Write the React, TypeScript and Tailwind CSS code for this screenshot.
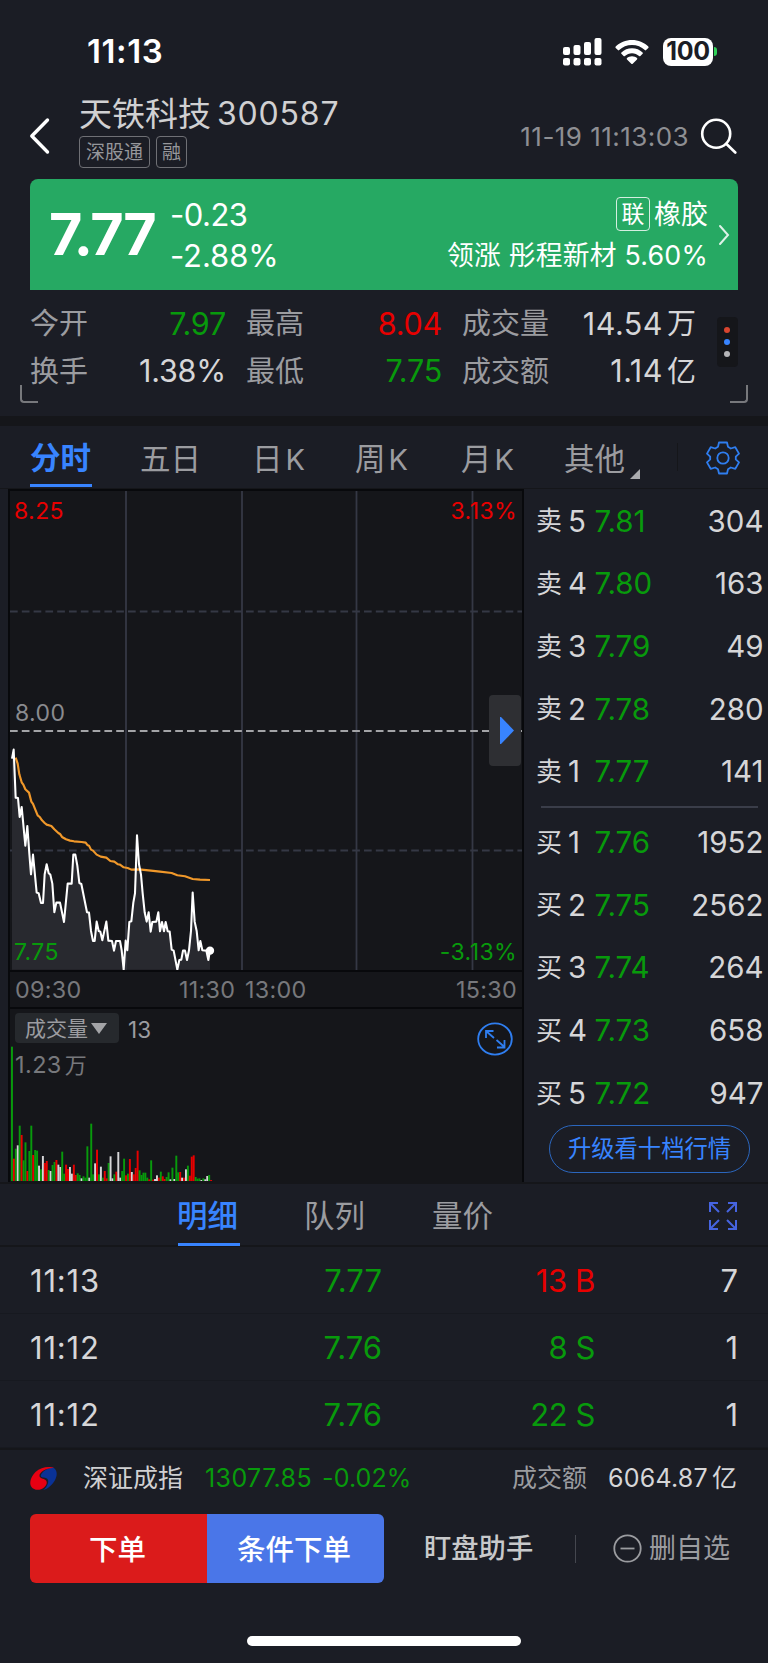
import type { ReactNode } from "react";

const UP = "text-[#e80000]";
const DOWN = "text-[#089a0c]";

/* ---------- status bar ---------- */

function StatusBar() {
  return (
    <div className="flex h-[92px] items-center justify-between pt-[11px] pl-[87px] pr-[51px] text-white">
      <span className="text-[33px] font-semibold leading-none tracking-[0.6px]">11:13</span>
      <div className="flex h-7 items-center">
        <svg width="40" height="28" viewBox="0 0 40 28" fill="#fff" className="mr-[13px]">
          <rect x="1" y="9" width="7" height="8" rx="2" />
          <rect x="11.5" y="7" width="7" height="10" rx="2" />
          <rect x="22" y="4" width="7" height="13" rx="2" />
          <rect x="32.5" y="0" width="7" height="17" rx="2" />
          <rect x="1" y="20" width="7" height="7.5" rx="2" />
          <rect x="11.5" y="20" width="7" height="7.5" rx="2" />
          <rect x="22" y="20" width="7" height="7.5" rx="2" />
          <rect x="32.5" y="20" width="7" height="7.5" rx="2" />
        </svg>
        <svg width="34" height="26" viewBox="0 0 34 26" fill="#fff" className="mr-[14px]">
          <path d="M17 1C10.600 1 4.900 3.500.7 7.500q-.7.700 0 1.400l2.200 2.200q.6.600 1.300 0C7.500 8 12 6.100 17 6.100S26.500 8 29.800 11.100q.7.600 1.300 0l2.200-2.200q.7-.700 0-1.400C29.100 3.500 23.400 1 17 1Z" />
          <path d="M17 9.300c-4.100 0-7.800 1.600-10.600 4.100q-.7.700 0 1.400l2.200 2.200q.6.600 1.300.1C11.800 15.400 14.300 14.300 17 14.300s5.200 1.100 7.100 2.800q.7.500 1.300-.1l2.200-2.200q.7-.7 0-1.400C24.800 10.900 21.100 9.300 17 9.300Z" />
          <path d="M17 17.300c-2 0-3.700.7-5 1.800q-.7.700 0 1.400l4.300 4.200q.7.600 1.400 0l4.300-4.200q.7-.7 0-1.400c-1.300-1.100-3-1.800-5-1.800Z" />
        </svg>
        <div className="flex h-[28px] w-[50px] items-center justify-center rounded-[8px] bg-white text-[25px] font-bold leading-none tracking-[-0.3px] text-[#1b1d25]">
          100
        </div>
        <div className="ml-[1px] h-[9px] w-[3px] rounded-r-full bg-[#30d158]" />
      </div>
    </div>
  );
}

/* ---------- title ---------- */

function Tag({ children, width }: { children: ReactNode; width: string }) {
  return (
    <span className={`flex h-[32px] items-center justify-center rounded-[4px] border border-[#6f7075] text-[19px] leading-none text-[#96979b] ${width}`}>
      {children}
    </span>
  );
}

function TitleBar() {
  return (
    <div className="flex h-[87px] items-start pl-[29px] pr-[31px]">
      <svg width="22" height="38" viewBox="0 0 22 38" className="mt-[25px] shrink-0" fill="none" stroke="#fff" strokeWidth="3.400" strokeLinecap="round" strokeLinejoin="round">
        <path d="M18.500 3 2.800 19 18.500 35" />
      </svg>
      <div className="ml-[28px] flex flex-col">
        <div className="flex h-[44px] items-center text-[#d0d0d2]">
          <span className="text-[33px] leading-none">天铁科技</span>
          <span className="ml-[6px] text-[32px] leading-none tracking-[0.800px]">300587</span>
        </div>
        <div className="flex gap-[6px]">
          <Tag width="w-[71px]">深股通</Tag>
          <Tag width="w-[31px]">融</Tag>
        </div>
      </div>
      <span className="ml-auto flex h-[89px] items-center text-[26px] leading-none tracking-[0.450px] text-[#8e8f93]">11-19 11:13:03</span>
      <svg width="37" height="36" viewBox="0 0 37 36" className="ml-[11px] mt-[26px] shrink-0" fill="none" stroke="#fff" strokeWidth="2.600" strokeLinecap="round">
        <circle cx="16.200" cy="15.700" r="14" />
        <path d="m26.500 26 8.800 8.500" />
      </svg>
    </div>
  );
}

/* ---------- price banner ---------- */

function PriceBanner() {
  return (
    <div className="mx-[30px] flex h-[111px] items-center rounded-t-[8px] bg-[#26a963] pl-[19px] pr-[8px] text-white">
      <span className="w-[121px] text-[57.500px] font-bold leading-none tracking-[-1.400px]">7.77</span>
      <div className="flex flex-col text-[31px] leading-none">
        <span className="flex h-[41px] items-center tracking-[-0.500px]">-0.23</span>
        <span className="flex h-[41px] items-center tracking-[-0.100px]">-2.88%</span>
      </div>
      <div className="ml-auto flex flex-col items-end leading-none">
        <div className="flex h-[41px] items-center">
          <span className="flex h-[34px] w-[34px] items-center justify-center rounded-[4px] border border-white/80 text-[23px]">联</span>
          <span className="ml-[4px] text-[27px]">橡胶</span>
        </div>
        <span className="flex h-[41px] items-center whitespace-pre text-[26.800px] tracking-[0.200px]">领涨 彤程新材 5.60%</span>
      </div>
      <svg width="12" height="22" viewBox="0 0 12 22" className="ml-[10px]" fill="none" stroke="#fff" strokeOpacity=".85" strokeWidth="2" strokeLinecap="round">
        <path d="m2 2 8 9-8 9" />
      </svg>
    </div>
  );
}

/* ---------- stats ---------- */

function Stat({ label, value, unit, tone, width }: { label: string; value: string; unit?: string; tone: string; width: string }) {
  return (
    <div className={`flex h-[47.500px] items-center justify-between leading-none ${width}`}>
      <span className="text-[29px] text-[#9b9ca0]">{label}</span>
      <span className={`flex items-center text-[30.500px] ${tone}`}>
        <span className={unit ? "tracking-[0.500px]" : "tracking-[-0.200px]"}>{value}</span>
        {unit && <span className="ml-[4px] text-[29px]">{unit}</span>}
      </span>
    </div>
  );
}

function Stats() {
  const light = "text-[#d6d6d8]";
  return (
    <div className="relative flex h-[126px] pl-[30px] pt-[10px]">
      <div className="grid h-[95px] w-[666px] grid-cols-[196px_196px_234px] gap-x-[20px]">
        <Stat label="今开" value="7.97" tone={DOWN} width="w-[196px]" />
        <Stat label="最高" value="8.04" tone={UP} width="w-[196px]" />
        <Stat label="成交量" value="14.54" unit="万" tone={light} width="w-[234px]" />
        <Stat label="换手" value="1.38%" tone={light} width="w-[196px]" />
        <Stat label="最低" value="7.75" tone={DOWN} width="w-[196px]" />
        <Stat label="成交额" value="1.14" unit="亿" tone={light} width="w-[234px]" />
      </div>
      <div className="ml-[21px] mt-[17px] flex h-[50px] w-[21px] flex-col items-center justify-center gap-[6px] rounded-[4px] bg-[#15161a] pr-px">
        <i className="h-[6px] w-[6px] rounded-full bg-[#d8452f]" />
        <i className="h-[6px] w-[6px] rounded-full bg-[#3884ff]" />
        <i className="h-[6px] w-[6px] rounded-full bg-[#b5b5b8]" />
      </div>
      <i className="absolute bottom-[13px] left-[20px] h-[18px] w-[18px] rounded-bl-[4px] border-b-2 border-l-2 border-[#77787c]" />
      <i className="absolute bottom-[13px] right-[20px] h-[18px] w-[18px] rounded-br-[4px] border-b-2 border-r-2 border-[#77787c]" />
    </div>
  );
}

/* ---------- period tabs ---------- */

function PeriodTabs() {
  const tab = "flex h-full items-center whitespace-nowrap pt-[4px]";
  const letter = "text-[29px]";
  return (
    <div className="flex h-[63px] items-center border-b border-[#15161a] pl-[30px] pr-[28px] text-[30.500px] leading-none text-[#9b9ca0]">
      <div className="flex h-full w-[110px] flex-col text-[#3884ff]">
        <span className="flex h-[58px] items-center pt-[7px] font-semibold">分时</span>
        <span className="h-[3px] w-[62px] bg-[#3884ff]" />
      </div>
      <span className={`${tab} w-[112px]`}>五日</span>
      <span className={`${tab} w-[103px] gap-[3px]`}>日<span className={letter}>K</span></span>
      <span className={`${tab} w-[106px] gap-[3px]`}>周<span className={letter}>K</span></span>
      <span className={`${tab} w-[103px] gap-[3px]`}>月<span className={letter}>K</span></span>
      <span className={tab}>其他</span>
      <svg width="10" height="10" viewBox="0 0 10 10" className="ml-[5px] mt-[33px]" fill="#a9aaad">
        <path d="M10 0v10H0Z" />
      </svg>
      <span className="ml-[37px] h-[28px] w-px bg-[#15161a]" />
      <svg width="34" height="34" viewBox="0 0 34 34" className="ml-auto mt-[1px]" fill="none" stroke="#2f7ef0" strokeWidth="1.800" strokeLinejoin="round">
        <circle cx="17" cy="17" r="5.700" />
        <path d="M13 1.500h8l1 4.300 2.800 1.700 4.500-1.300 3.700 6.400-3.200 3v2.800l3.200 3-3.700 6.400-4.500-1.300-2.800 1.700-1 4.300h-8l-1-4.300-2.800-1.700-4.500 1.300L1 21.400l3.200-3v-2.800l-3.200-3 3.700-6.400 4.500 1.300L12 5.800Z" />
      </svg>
    </div>
  );
}

/* ---------- intraday chart ---------- */

const PRICE =
  "36,115 41,88 47,232 54,233 59,290 65,260 76,376 82,317 88,400 93,462 99,403 110,517 116,519 123,548 129,548 134,462 140,432 146,459 151,463 157,490 163,576 169,547 180,547 192,605 203,490 215,490 220,403 226,403 232,436 238,488 244,491 261,576 267,577 273,632 279,662 284,662 290,604 296,632 301,634 307,660 319,604 325,661 336,662 342,691 348,662 360,662 365,690 371,748 377,661 382,690 388,605 394,603 400,547 405,519 411,345 417,432 423,463 428,519 434,576 440,604 446,576 452,634 457,605 469,604 475,576 480,633 486,605 492,633 497,605 503,633 509,634 515,688 521,691 532,748 538,719 544,718 549,691 555,691 561,719 567,690 573,632 578,517 584,604 590,632 596,690 601,662 607,690 619,691 625,719 630,691";
const AVERAGE =
  "47,112 53,130 58,162 65,186 70,193 76,207 87,217 94,244 99,251 105,266 113,285 119,290 126,300 134,308 140,313 154,317 163,327 175,338 180,341 186,350 198,357 210,361 222,363 245,365 257,367 262,374 267,376 273,388 279,391 290,403 302,409 319,412 331,422 343,424 354,432 360,433 371,441 383,443 394,448 417,447 446,450 480,454 515,458 532,465 555,468 578,476 600,478 630,479";

function IntradayChart() {
  return (
    <div className="relative h-[479px] text-[23px] leading-none tracking-[0.400px]">
      <svg width="512" height="479" viewBox="0 0 512 479" className="block">
        <g stroke="#353845" strokeWidth="1.800">
          <path d="M116 0v479M232 0v479M346.500 0v479M462.500 0v479" />
          <path d="M0 120.500h512M0 359.500h512" strokeDasharray="7.700 4.100" />
        </g>
        <path d="M0 240h512" stroke="#a3a4a7" strokeWidth="2" strokeDasharray="7.700 4.100" />
        <g transform="translate(-10 229.300) scale(.33333)" fill="none" strokeLinejoin="round">
          <polygon points={`36,748 ${PRICE} 630,748`} fill="#28292f" />
          <path d="M378 345v403" stroke="#35373f" strokeWidth="5" />
          <polyline points={AVERAGE} stroke="#f0982a" strokeWidth="6.500" />
          <polyline points={PRICE} stroke="#fff" strokeWidth="6.200" />
          <circle cx="630" cy="691" r="12.500" fill="#fff" />
        </g>
      </svg>
      <span className={`absolute left-[4px] top-[9px] ${UP}`}>8.25</span>
      <span className={`absolute right-[5px] top-[9px] ${UP}`}>3.13%</span>
      <span className="absolute left-[5px] top-[211px] text-[#8a8b8f]">8.00</span>
      <span className={`absolute bottom-[6px] left-[4px] ${DOWN}`}>7.75</span>
      <span className={`absolute bottom-[6px] right-[5px] ${DOWN}`}>-3.13%</span>
      <div className="absolute right-[1px] top-[204px] flex h-[71px] w-[32px] items-center justify-end rounded-[4px] bg-[#2e2f33] pr-[7px]">
        <svg width="14" height="27" viewBox="0 0 14 27" fill="#3884ff">
          <path d="M0 0h1l13 13.500L1 27H0Z" />
        </svg>
      </div>
    </div>
  );
}

/* one entry per minute: colour key followed by the height */
const VOLUME =
  "g403 r67 g97 w107 g166 r138 g62 g116 r30 g90 g166 r78 g93 g91 w46 g35 w75 r54 r60 g33 w30 g48 g57 r63 w49 w42 g88 g22 r49 r36 w42 w22 r49 r18 g23 g18 w8 g14 g10 g104 w10 g172 g20 w53 r94 g20 w43 g10 r30 r8 g54 w74 w8 g20 r28 w87 w10 g30 g67 r17 g22 r66 w27 r20 r39 r91 g32 g18 g25 g25 g10 r5 g62 r4 w6 w17 r10 g28 r14 r6 g12 g26 w5 g40 w6 g76 g26 r27 w10 r10 w35 g46 r16 r73 r77 g12 g7 g8 w3 g8 w5 w15 g18 r3";
const BAR_COLOUR: Record<string, string> = { g: "#089a0c", r: "#e80000", w: "#d6d6d8" };

function VolumeChart() {
  return (
    <div className="relative h-[172px]">
      <svg width="512" height="172" viewBox="0 0 1536 516" className="block">
        {VOLUME.split(" ").map((bar, i) => {
          const height = Number(bar.slice(1));
          return <rect key={i} x={3 + i * 5.8} y={516 - height} width="5.800" height={height} fill={BAR_COLOUR[bar[0]]} />;
        })}
      </svg>
      <div className="absolute left-[5px] right-[9px] top-[4px] flex items-start leading-none text-[#9b9ca0]">
        <div className="flex h-[30px] w-[104px] items-center rounded-[4px] bg-[#26292d] pl-[10px] text-[21px]">
          成交量
          <svg width="16" height="11" viewBox="0 0 16 11" className="ml-[3px]" fill="#a3a4a7">
            <path d="M0 0h16L8 11Z" />
          </svg>
        </div>
        <span className="ml-[9px] mt-[6px] text-[22.500px]">13</span>
        <svg width="36" height="34" viewBox="0 0 36 34" className="ml-auto mt-[9px]" fill="none" stroke="#2f7ef0" strokeWidth="1.800">
          <ellipse cx="18" cy="17" rx="16.800" ry="15.600" />
          <path d="M9 16V9h7.500M9 9l8 7M19.500 18l8 7M20 25.500h7.500V18" />
        </svg>
      </div>
      <span className="absolute left-[5px] top-[44px] flex items-center text-[23.500px] leading-none tracking-[0.400px] text-[#77787c]">
        1.23<span className="ml-[3px] text-[22px]">万</span>
      </span>
    </div>
  );
}

function ChartPanel() {
  return (
    <div className="ml-[8px] flex w-[516px] flex-col border-x-2 border-t-2 border-[#08090c] bg-[#15161a]">
      <IntradayChart />
      <div className="flex h-[39px] items-center border-y-2 border-[#08090c] pl-[5px] pr-[5px] text-[23.300px] leading-none tracking-[0.300px] text-[#77787c]">
        <span className="w-[164px]">09:30</span>
        <span className="w-[66px]">11:30</span>
        <span>13:00</span>
        <span className="ml-auto">15:30</span>
      </div>
      <VolumeChart />
    </div>
  );
}

/* ---------- order book ---------- */

type Level = [string, string, string, string];
const ASKS: Level[] = [
  ["卖", "5", "7.81", "304"],
  ["卖", "4", "7.80", "163"],
  ["卖", "3", "7.79", "49"],
  ["卖", "2", "7.78", "280"],
  ["卖", "1", "7.77", "141"],
];
const BIDS: Level[] = [
  ["买", "1", "7.76", "1952"],
  ["买", "2", "7.75", "2562"],
  ["买", "3", "7.74", "264"],
  ["买", "4", "7.73", "658"],
  ["买", "5", "7.72", "947"],
];

function Levels({ rows }: { rows: Level[] }) {
  return (
    <>
      {rows.map(([side, depth, price, size]) => (
        <div key={side + depth} className="flex h-[62.700px] items-center pl-[12px] pr-[4.500px] text-[29.500px] leading-none text-[#d6d6d8]">
          <span className="w-[32px] text-[26px]">{side}</span>
          <span className="w-[26.500px]">{depth}</span>
          <span className={DOWN}>{price}</span>
          <span className="ml-auto">{size}</span>
        </div>
      ))}
    </>
  );
}

function OrderBook() {
  return (
    <div className="flex flex-1 flex-col pt-[1px]">
      <Levels rows={ASKS} />
      <div className="ml-[17px] mr-[10px] mt-[3px] h-[2px] bg-[#3a3d49]" />
      <div className="h-[3px]" />
      <Levels rows={BIDS} />
      <div className="ml-[25px] flex h-[48px] w-[201px] items-center justify-center rounded-full border border-[#2b66bd] text-[23.300px] leading-none text-[#3884ff]">
        升级看十档行情
      </div>
    </div>
  );
}

/* ---------- trades ---------- */

function TradeTabs() {
  return (
    <div className="flex h-[65px] items-start border-y-2 border-[#15161a] pl-[177px] pr-[31px] text-[30.500px] leading-none text-[#9b9ca0]">
      <div className="flex w-[127px] flex-col text-[#3884ff]">
        <span className="flex h-[59px] items-center pt-[5px] font-medium">明细</span>
        <span className="ml-px h-[3px] w-[62px] bg-[#3884ff]" />
      </div>
      <span className="flex h-[59px] w-[128px] items-center pt-[5px]">队列</span>
      <span className="flex h-[59px] items-center pt-[5px]">量价</span>
      <svg width="28" height="28" viewBox="0 0 28 28" className="ml-auto mt-[18px]" fill="none" stroke="#4664e0" strokeWidth="2">
        <path d="M1 10V1h8M1 1l9 9M19 1h8v9M27 1l-9 9M1 18v9h8M1 27l9-9M19 27h8v-9M27 27l-9-9" />
      </svg>
    </div>
  );
}

const TRADES = [
  { time: "11:13", price: "7.77", volume: "13 B", tone: UP, count: "7" },
  { time: "11:12", price: "7.76", volume: "8 S", tone: DOWN, count: "1" },
  { time: "11:12", price: "7.76", volume: "22 S", tone: DOWN, count: "1" },
];

function Trades() {
  return (
    <div>
      {TRADES.map((t, i) => (
        <div key={i} className="grid h-[67px] grid-cols-[170px_182px_213px_143px] items-center border-b border-[#171920] px-[30px] pt-[1px] text-right text-[31px] leading-none text-[#d6d6d8]">
          <span className="text-left tracking-[0.800px]">{t.time}</span>
          <span className={DOWN}>{t.price}</span>
          <span className={`tracking-[-0.400px] ${t.tone}`}>{t.volume}</span>
          <span>{t.count}</span>
        </div>
      ))}
    </div>
  );
}

/* ---------- footer ---------- */

function IndexBar() {
  return (
    <div className="flex h-[66px] items-center border-t-2 border-[#15161a] pb-[8px] pl-[29px] pr-[31px] text-[25px] leading-none">
      <svg width="29" height="26" viewBox="0 0 29 26" className="mr-[25px]">
        <path d="M24 2.500c3.500 2 5 6 2.500 11.500-2.300 5.200-7.500 10-12.500 11.200 3.400-2.600 6-7 5-10.200-1-2.800-5-2-6.500-3C9.500 9.500 18 2.500 24 2.500Z" fill="#0a3296" />
        <path d="M25 3C21 1 12 1.500 6.500 7 1.500 12 0 18.500 2.500 22c2.500 3.600 9 3.700 12.500.5 3-2.700 3.600-5.600 1.500-7.500-2-1.700-5.500-1.200-6-4C10 7 18 2.500 25 3Z" fill="#e60012" />
      </svg>
      <span className="text-[#d0d0d2]">深证成指</span>
      <span className={`ml-[22px] tracking-[0.400px] ${DOWN}`}>13077.85</span>
      <span className={`ml-[10px] tracking-[0.100px] ${DOWN}`}>-0.02%</span>
      <span className="ml-auto text-[#9b9ca0]">成交额</span>
      <span className="ml-[21px] tracking-[0.250px] text-[#d6d6d8]">6064.87</span>
      <span className="ml-[4px] text-[#d6d6d8]">亿</span>
    </div>
  );
}

function ActionBar() {
  return (
    <div className="flex h-[69px] items-center pl-[30px] pr-[38px] leading-none">
      <div className="flex h-full overflow-hidden rounded-[6px] text-[28.500px] font-medium text-white">
        <button className="h-full w-[177px] bg-[#db1b1b] pr-[2px] pt-[3px]">下单</button>
        <button className="h-full w-[177px] bg-[#4a76e8] pr-[3px] pt-[3px]">条件下单</button>
      </div>
      <span className="ml-[40px] text-[27.300px] font-medium text-[#c8c9cb]">盯盘助手</span>
      <span className="ml-[42px] h-[28px] w-px bg-[#45474f]" />
      <svg width="29" height="29" viewBox="0 0 29 29" className="ml-auto" fill="none" stroke="#9b9ca0" strokeWidth="1.800">
        <circle cx="14.500" cy="14.500" r="13.200" />
        <path d="M7.500 14.500h14" />
      </svg>
      <span className="ml-[7px] text-[27px] text-[#9b9ca0]">删自选</span>
    </div>
  );
}

export default function App() {
  return (
    <div className="flex h-[1663px] w-[768px] flex-col overflow-hidden bg-[#1b1d25] font-['Inter','Noto_Sans_CJK_SC',sans-serif]">
      <StatusBar />
      <TitleBar />
      <PriceBanner />
      <Stats />
      <div className="h-[10px] shrink-0 bg-[#15161a]" />
      <PeriodTabs />
      <div className="flex h-[693px] shrink-0">
        <ChartPanel />
        <OrderBook />
      </div>
      <TradeTabs />
      <Trades />
      <IndexBar />
      <ActionBar />
      <div className="mx-auto mt-[53px] h-[10px] w-[274px] shrink-0 rounded-full bg-white" />
    </div>
  );
}
